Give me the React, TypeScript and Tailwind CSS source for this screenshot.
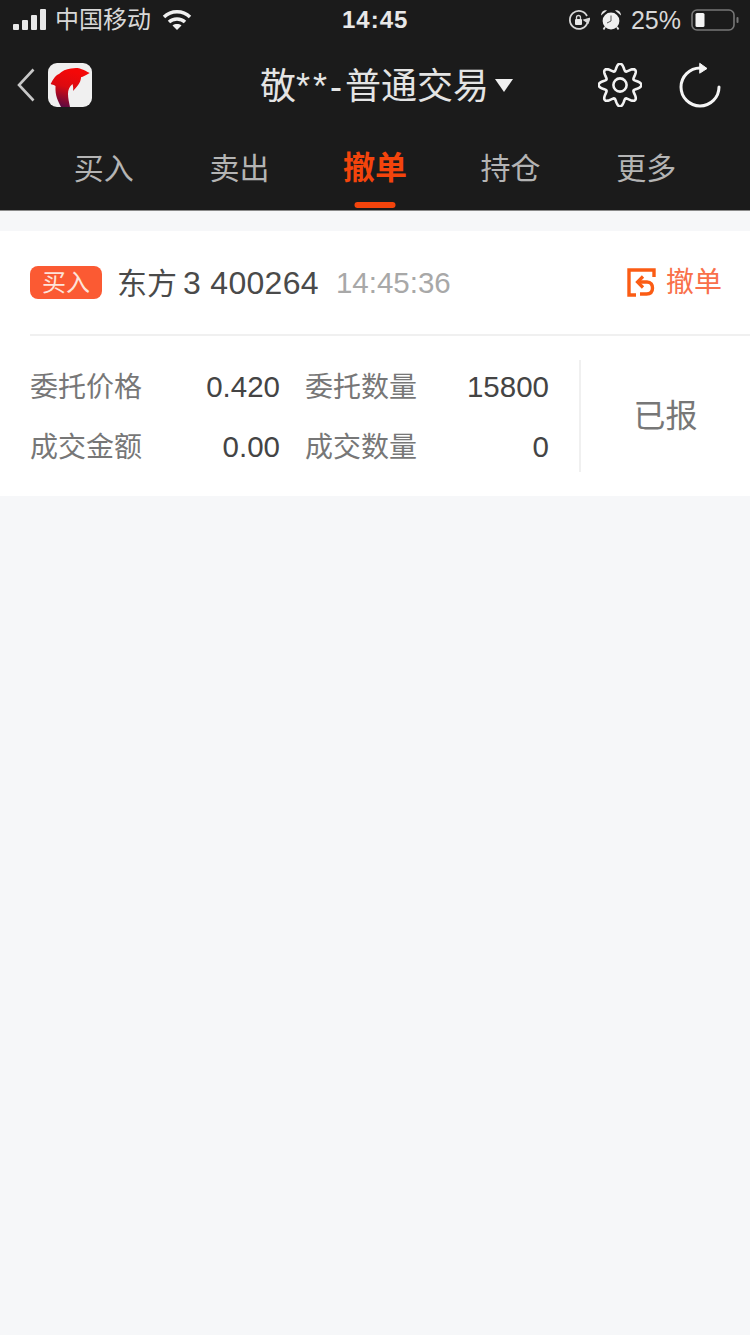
import React from 'react';

const tabs = ['买入', '卖出', '撤单', '持仓', '更多'];

// scalloped outline, 8 lobes round the centre
const gearPath =
  Array.from({ length: 144 }, (_, i) => {
    const a = (i / 144) * Math.PI * 2;
    const r = 18 + 3.4 * Math.cos(8 * a);
    return `${i === 0 ? 'M' : 'L'}${(22 + r * Math.cos(a)).toFixed(2)} ${(22 + r * Math.sin(a)).toFixed(2)}`;
  }).join(' ') + ' Z';

const SignalIcon = () => (
  <svg width="34" height="22" viewBox="0 0 34 22" fill="#e8e8e8">
    <rect x="0" y="15" width="6" height="6" rx="1" />
    <rect x="9" y="11" width="6" height="10" rx="1" />
    <rect x="18" y="6" width="6" height="15" rx="1" />
    <rect x="27" y="0" width="6" height="21" rx="1" />
  </svg>
);

const WifiIcon = () => (
  <svg width="30" height="22" viewBox="0 0 30 22" fill="none" stroke="#f0f0f0" strokeWidth="3.4">
    <path d="M2 8 C9 1 21 1 28 8" />
    <path d="M7 13 C11 9 19 9 23 13" />
    <path d="M15 21 L10.5 16.5 C13 14.6 17 14.6 19.5 16.5 Z" fill="#f0f0f0" stroke="none" />
  </svg>
);

const RotationLockIcon = () => (
  <svg width="22" height="22" viewBox="0 0 22 22" fill="none" stroke="#d8d8d8" strokeWidth="1.8">
    <path d="M19.5 13.5 A9 9 0 1 1 19 7" />
    <path d="M21.5 9.5 L16.5 11 L20 13.5 Z" fill="#d8d8d8" />
    <rect x="7" y="10" width="7" height="6" rx="1" fill="#e8e8e8" stroke="none" />
    <path d="M8.5 10 V8.5 A2 2 0 0 1 12.5 8.5 V10" strokeWidth="1.3" />
  </svg>
);

const AlarmIcon = () => (
  <svg width="22" height="22" viewBox="0 0 22 22" fill="none">
    <circle cx="11" cy="12" r="8.4" fill="#f0f0f0" />
    <path d="M11 6.5 V12 L7 14" stroke="#555555" strokeWidth="1" />
    <path d="M1 6.5 C1 3 4 0.5 7 1.5 Z" fill="#e4e4e4" />
    <path d="M21 6.5 C21 3 18 0.5 15 1.5 Z" fill="#e4e4e4" />
    <path d="M5 18 L3.5 20.5 M17 18 L18.5 20.5" stroke="#e4e4e4" strokeWidth="1.8" />
  </svg>
);

const BatteryIcon = () => (
  <svg width="48" height="24" viewBox="0 0 48 24" fill="none">
    <rect x="1" y="2" width="42" height="20" rx="5" stroke="#777777" strokeWidth="1.6" />
    <rect x="4.5" y="5" width="9" height="14" rx="1.5" fill="#f4f4f4" />
    <rect x="45.5" y="9" width="2" height="6" rx="1" fill="#777777" />
  </svg>
);

const DolphinLogo = () => (
  <div className="w-[44px] h-[44px] rounded-[9px] bg-[#f0f0f0] overflow-hidden ml-[13px]">
    <svg width="44" height="44" viewBox="0 0 44 44">
      <defs>
        <linearGradient id="dolphin" x1="0.6" y1="0.1" x2="0.35" y2="1">
          <stop offset="0" stopColor="#f40808" />
          <stop offset="0.45" stopColor="#dc0a10" />
          <stop offset="1" stopColor="#5e0a40" />
        </linearGradient>
      </defs>
      <path
        d="M2.7 21 C5 16 8 12 11 11 C14 8 18 6 23 5.5 C28 4.5 31 5 33 6 C36 7 39 8.5 41.7 10 C38 12.5 35 13.5 33 14.3 C33 18 31 22 25 28 C25.5 25 25 23 24.5 21 C21 24 20 27 20 31 C20 35 21 39 22 44 L13 44 C10 38 7 33 7.5 23 C6 22 4 21.5 2.7 21 Z"
        fill="url(#dolphin)"
      />
    </svg>
  </div>
);

const GearIcon = () => (
  <svg width="44" height="44" viewBox="0 0 44 44" fill="none" stroke="#f2f2f2" strokeWidth="2.6">
    <path d={gearPath} />
    <circle cx="22" cy="22" r="6.6" />
  </svg>
);

const RefreshIcon = () => (
  <svg width="44" height="46" viewBox="0 0 44 46" fill="none" stroke="#f5f5f5" strokeWidth="3" strokeLinecap="round">
    <path d="M41 25 A19 19 0 1 1 22 6" />
    <path d="M22 1.5 L29 6.5 L22 11 Z" fill="#f5f5f5" strokeWidth="1" strokeLinejoin="round" />
  </svg>
);

const CancelIcon = () => (
  <svg width="29" height="29" viewBox="0 0 29 29" fill="none" stroke="#fb5c14" strokeWidth="3.4">
    <path d="M27 9 V2 H2 V27 H9" />
    <path d="M16 8.5 L10.5 14 L16 19.5" strokeWidth="3.2" />
    <path d="M11 14 H20 C24 14 25.5 17 25.5 20 C25.5 24 23 26 19.5 26 H13" strokeWidth="3.4" />
  </svg>
);

const Field = ({ label, value }: { label: string; value: string }) => (
  <div className="flex items-center justify-between h-[60px] pt-[3px]">
    <span className="text-[28px] text-[#777777]">{label}</span>
    <span className="text-[29.5px] text-[#444444]">{value}</span>
  </div>
);

export default function App() {
  return (
    <div
      className="w-[750px] h-[1335px] bg-[#f6f7f9] overflow-hidden"
      style={{ fontFamily: '"Liberation Sans", "Noto Sans CJK SC", sans-serif' }}
    >
      {/* Dark header */}
      <header className="h-[211px] bg-[#1b1b1b] border-b border-[#8a8a8a]">
        {/* Status bar */}
        <div className="h-[40px] flex items-center pl-[13px] pr-[11px] text-[#d8d8d8]">
          <SignalIcon />
          <span className="ml-[8px] text-[24px] leading-none">中国移动</span>
          <span className="ml-[11px] flex"><WifiIcon /></span>
          <span className="ml-[150px] w-[70px] text-[24px] font-bold tracking-[1px] leading-none text-[#e8e8e8]">14:45</span>
          <span className="ml-auto flex"><RotationLockIcon /></span>
          <span className="ml-[10px] flex"><AlarmIcon /></span>
          <span className="ml-[9px] text-[25px] leading-none">25%</span>
          <span className="ml-[10px] flex"><BatteryIcon /></span>
        </div>

        {/* Title row */}
        <div className="h-[90px] flex items-center pl-[17px] pr-[28px]">
          <svg width="18" height="34" viewBox="0 0 18 34" fill="none" stroke="#c8c8c8" strokeWidth="2.6">
            <path d="M16.5 1.5 L2 17 L16.5 32.5" />
          </svg>
          <DolphinLogo />
          <span className="ml-[168px] pt-[3px] text-[36px] leading-none text-[#e4e4e4] whitespace-nowrap">
            敬<span className="tracking-[3px]">**-</span>普通交易
          </span>
          <span className="ml-[6px] w-0 h-0 border-x-[9px] border-x-transparent border-t-[13px] border-t-[#f0f0f0]" />
          <span className="ml-auto flex"><GearIcon /></span>
          <span className="ml-[36px] flex"><RefreshIcon /></span>
        </div>

        {/* Tabs */}
        <nav className="h-[80px] grid grid-cols-5 px-[36px]">
          {tabs.map((tab) => (
            <div key={tab} className="relative flex items-center justify-center pb-[2px]">
              {tab === '撤单' ? (
                <>
                  <span className="text-[32px] leading-none font-bold text-[#f4440c] pb-[2px]">{tab}</span>
                  <span className="absolute bottom-[2px] left-1/2 -translate-x-1/2 w-[41px] h-[6px] rounded-full bg-[#f4440c]" />
                </>
              ) : (
                <span className="text-[30px] leading-none text-[#b4b4b4]">{tab}</span>
              )}
            </div>
          ))}
        </nav>
      </header>

      {/* Order card */}
      <section className="mt-[20px] bg-white pl-[30px]">
        <div className="h-[105px] flex items-center border-b-2 border-[#f0f0f0] pr-[28px]">
          <span className="w-[72px] h-[33px] flex items-center justify-center rounded-[8px] bg-[#fb5a33] text-[24px] leading-none text-[#fde3da]">
            买入
          </span>
          <span className="ml-[15px] text-[30px] leading-none text-[#4a4a4a] whitespace-nowrap">
            东方<span className="ml-[6px] text-[32px] tracking-[0.3px]">3 400264</span>
          </span>
          <span className="ml-[17px] text-[29.5px] leading-none text-[#a8a8a8]">14:45:36</span>
          <span className="ml-auto flex"><CancelIcon /></span>
          <span className="ml-[10px] text-[28px] leading-none text-[#f9704a]">撤单</span>
        </div>

        <div className="h-[160px] flex items-center">
          <div className="w-[519px] grid grid-cols-[250px_244px] gap-x-[25px]">
            <Field label="委托价格" value="0.420" />
            <Field label="委托数量" value="15800" />
            <Field label="成交金额" value="0.00" />
            <Field label="成交数量" value="0" />
          </div>
          <div className="ml-[30px] flex-1 h-[112px] border-l-2 border-[#f0f0f0] flex items-center justify-center">
            <span className="text-[32px] leading-none text-[#777777]">已报</span>
          </div>
        </div>
      </section>
    </div>
  );
}
